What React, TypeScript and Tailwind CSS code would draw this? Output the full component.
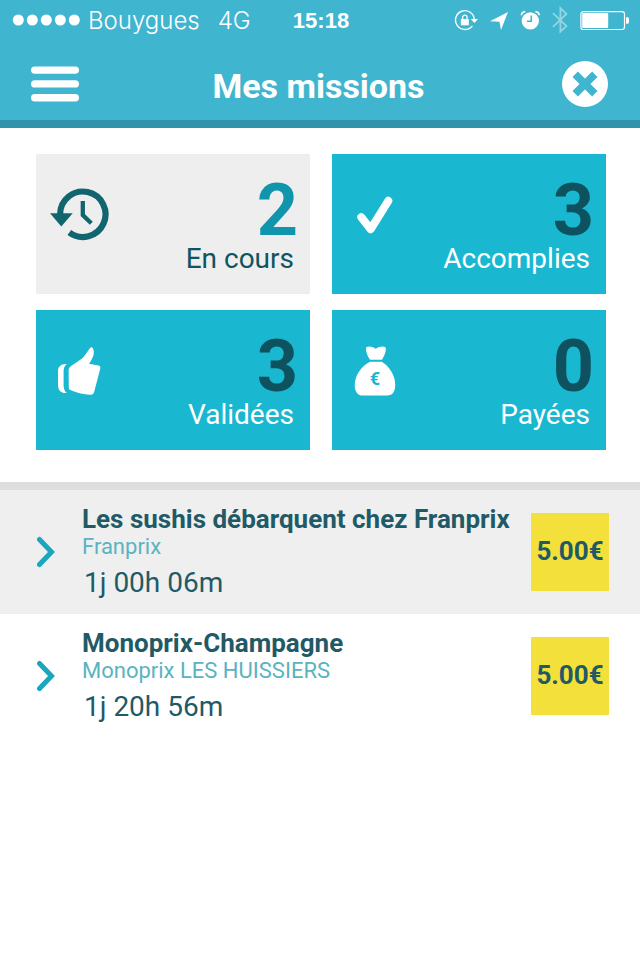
import type { ReactNode } from "react";

const HistoryIcon = () => (
  <svg viewBox="0 0 60 60" className="size-[60px]" fill="none" aria-hidden="true">
    <path
      d="M10.1 30.2A22.7 22.7 0 1 1 19.3 48.5"
      stroke="#10656f"
      strokeWidth="6.2"
    />
    <path d="M0 29.2H22.7L11.3 42.4Z" fill="#10656f" />
    <path d="M32.8 17V31L41.3 39.2" stroke="#10656f" strokeWidth="4.3" />
  </svg>
);

const CheckIcon = () => (
  <svg viewBox="0 0 60 60" className="size-[60px]" fill="none" aria-hidden="true">
    <path
      d="M15.3 33.2L24.7 45.2L42.3 16.8"
      stroke="white"
      strokeWidth="8"
      strokeLinecap="round"
      strokeLinejoin="round"
    />
  </svg>
);

const ThumbIcon = () => (
  <svg viewBox="0 0 60 60" className="size-[60px]" fill="white" aria-hidden="true">
    <path d="M41.6 7.2C43.6 7.6 44.4 12.2 43.4 15.4C42.6 18 40.6 21.4 39 23.8L48.6 25.6C50.2 26 50.5 27 50.3 28.6L44.3 51.6C43.4 54.4 42.6 55 40 54.8C33 54.3 26 52.6 20.4 50C19.2 49.4 18.9 48.8 18.8 47.4L18.6 31C18.6 28.4 19.2 27.4 21.2 26L31.7 18.7C34.6 16 37 12.4 39 9.4C40.2 7.6 40.6 7 41.6 7.2Z" />
    <path d="M16.8 24C14.4 26 13.6 28.6 13.6 31V45C13.6 48.4 14.4 51 16.8 53C11.4 53.6 8 50.4 8 45V31C8 26.4 11.4 23.6 16.8 24Z" />
  </svg>
);

const MoneyBagIcon = () => (
  <svg viewBox="0 0 60 60" className="size-[60px]" fill="white" aria-hidden="true">
    <path d="M20 7.4C23 5.8 26 6.6 29.8 8.7C33.4 6.6 36.6 5.8 39.7 7.4C40.4 11.8 38 16.4 36 19.7H24C21.6 16.4 19.6 11.8 20 7.4Z" />
    <path d="M24 21.8H35.8C43.6 26.4 49.2 36 49.2 44.6C49.2 51.8 46.6 55.6 41 55.6H17C11.4 55.6 8.8 51.8 8.8 45C8.8 36 14.8 26.2 24 21.8Z" />
    <text
      x="29"
      y="45"
      textAnchor="middle"
      fill="#1ab7d1"
      fontSize="18"
      fontWeight="700"
      fontFamily="Roboto, sans-serif"
    >
      €
    </text>
  </svg>
);

type Tile = {
  label: string;
  count: number;
  icon: ReactNode;
  active: boolean;
};

const tiles: Tile[] = [
  { label: "En cours", count: 2, icon: <HistoryIcon />, active: true },
  { label: "Accomplies", count: 3, icon: <CheckIcon />, active: false },
  { label: "Validées", count: 3, icon: <ThumbIcon />, active: false },
  { label: "Payées", count: 0, icon: <MoneyBagIcon />, active: false },
];

const missions = [
  {
    title: "Les sushis débarquent chez Franprix",
    place: "Franprix",
    remaining: "1j 00h 06m",
    price: "5.00€",
    shaded: true,
  },
  {
    title: "Monoprix-Champagne",
    place: "Monoprix LES HUISSIERS",
    remaining: "1j 20h 56m",
    price: "5.00€",
    shaded: false,
  },
];

function StatusBar() {
  return (
    <div className="grid h-10 grid-cols-[1fr_auto_1fr] items-center pl-3 pr-[10px] font-['Inter','Liberation_Sans',sans-serif] text-2xl">
      <div className="flex items-center gap-2 font-light">
        <svg viewBox="0 0 68 12" className="h-3 w-[68px]" fill="white" aria-hidden="true">
          <circle cx="6.3" cy="6" r="5.5" />
          <circle cx="20.3" cy="6" r="5.5" />
          <circle cx="34.3" cy="6" r="5.5" />
          <circle cx="48.3" cy="6" r="5.5" />
          <circle cx="62.3" cy="6" r="5.5" />
        </svg>
        <span className="pt-0.5">Bouygues</span>
        <span className="ml-[10px] pt-0.5">4G</span>
      </div>
      <span className="pt-0.5 font-['Liberation_Sans',sans-serif] text-[22px] font-bold">
        15:18
      </span>
      <div className="flex items-center justify-end gap-3">
        {/* Rotation lock */}
        <svg viewBox="0 0 24 24" className="size-6" fill="none" aria-hidden="true">
          <path d="M20.3 11.5A9.4 9.4 0 1 0 18.4 17.8" stroke="white" strokeWidth="1.4" />
          <path d="M16.8 11H24L20.4 15Z" fill="white" />
          <path d="M6.8 11H14.8V17.3H6.8Z" fill="white" />
          <path d="M8.6 11.5V9A2.3 2.3 0 0 1 13.1 9V11.5" stroke="white" strokeWidth="1.3" />
        </svg>
        {/* Location */}
        <svg viewBox="0 0 18 20" className="h-5 w-[18px]" fill="white" aria-hidden="true">
          <path d="M18 2L11 20L9.5 11.8L0 11.3Z" />
        </svg>
        {/* Alarm */}
        <svg viewBox="0 0 20 20" className="size-5" fill="none" aria-hidden="true">
          <circle cx="10.3" cy="10.9" r="8.6" fill="white" />
          <path d="M1.4 5.2C1.6 3 3 1.8 5.2 1.6M15.4 1.6C17.6 1.8 19 3 19.2 5.2" stroke="white" strokeWidth="1.6" />
          <path d="M11.2 5.4V11.2H7" stroke="#40b5cf" strokeWidth="1.5" />
        </svg>
        {/* Bluetooth */}
        <svg viewBox="0 0 16 28" className="h-7 w-4" fill="none" aria-hidden="true">
          <path
            d="M1 7.2L14.4 20L8.4 25.6V2.2L14.4 8L1 20.8"
            stroke="#93d5e3"
            strokeWidth="1.8"
          />
        </svg>
        {/* Battery */}
        <svg viewBox="0 0 50 20" className="h-5 w-[50px]" fill="none" aria-hidden="true">
          <rect x="0.9" y="1.6" width="43.6" height="18" rx="2.5" stroke="white" strokeWidth="1.2" />
          <rect x="2.2" y="3.1" width="26" height="15" rx="1" fill="white" />
          <path d="M46 7.2H47.6Q49 7.2 49 8.8V12Q49 13.8 47.6 13.8H46Z" fill="white" />
        </svg>
      </div>
    </div>
  );
}

function Header() {
  return (
    <header className="border-b-8 border-[#3294ab] bg-[#40b5cf] text-white">
      <StatusBar />
      <nav className="flex h-20 items-center justify-between pl-[31px] pr-8 pt-2">
        <button type="button" aria-label="Menu">
          <svg viewBox="0 0 48 36" className="h-9 w-12" fill="white" aria-hidden="true">
            <rect y="0.4" width="48" height="7.4" rx="3.7" />
            <rect y="14.2" width="48" height="7.4" rx="3.7" />
            <rect y="28" width="48" height="7.4" rx="3.7" />
          </svg>
        </button>
        <h1 className="pr-1 pt-1 text-[34px] font-bold leading-10">Mes missions</h1>
        <button type="button" aria-label="Fermer">
          <svg viewBox="0 0 46 46" className="size-[46px]" fill="none" aria-hidden="true">
            <circle cx="23" cy="23" r="23" fill="white" />
            <path
              d="M13.2 13.2L32.8 32.8M32.8 13.2L13.2 32.8"
              stroke="#40b5cf"
              strokeWidth="7.6"
            />
          </svg>
        </button>
      </nav>
    </header>
  );
}

export default function App() {
  return (
    <div className="min-h-screen bg-white font-['Roboto',sans-serif]">
      <Header />

      {/* Counters */}
      <section className="grid grid-cols-2 gap-x-[22px] gap-y-4 pb-8 pl-9 pr-[34px] pt-[26px]">
        {tiles.map((tile) => (
          <button
            key={tile.label}
            type="button"
            aria-pressed={tile.active}
            className={`flex h-[140px] items-start justify-between pl-[14px] pr-3 pt-[23px] ${
              tile.active ? "bg-[#eeeeee]" : "bg-[#1ab7d1]"
            }`}
          >
            <span className="mt-[7px]">{tile.icon}</span>
            <span className="flex flex-col items-end">
              <span
                className={`text-[72px] font-bold leading-[68px] ${
                  tile.active ? "text-[#1095ad]" : "text-[#0d525e]"
                }`}
              >
                {tile.count}
              </span>
              <span
                className={`pr-1 text-[28px] leading-7 ${
                  tile.active ? "text-[#0f5560]" : "text-white"
                }`}
              >
                {tile.label}
              </span>
            </span>
          </button>
        ))}
      </section>

      {/* Missions */}
      <ul className="border-t-8 border-[#dedede]">
        {missions.map((mission) => (
          <li key={mission.title}>
            <a
              href="#"
              className={`flex items-center pl-9 pr-[31px] text-[#1f5a66] ${
                mission.shaded ? "bg-[#efefef]" : "bg-white"
              }`}
            >
              <svg viewBox="0 0 20 32" className="h-8 w-5 shrink-0" fill="none" aria-hidden="true">
                <path
                  d="M3.5 3.5L15.5 16L3.5 28.5"
                  stroke="#1ba6bd"
                  strokeWidth="5"
                  strokeLinecap="round"
                />
              </svg>
              <div className="min-w-0 flex-1 pb-[11px] pl-[26px] pt-[15px]">
                <h2 className="whitespace-nowrap text-[26px] font-bold leading-7">
                  {mission.title}
                </h2>
                <p className="text-[22px] leading-7 text-[#59b3c1]">{mission.place}</p>
                <p className="mt-0.5 pl-0.5 text-[28px] leading-10">{mission.remaining}</p>
              </div>
              <span className="flex size-[78px] shrink-0 items-center justify-center bg-[#f3e03b] pb-0.5 text-[26px] font-bold">
                {mission.price}
              </span>
            </a>
          </li>
        ))}
      </ul>
    </div>
  );
}
